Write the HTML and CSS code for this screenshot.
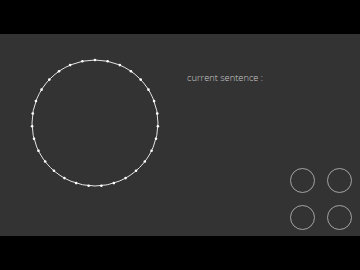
FILE: index.html
```html
<!DOCTYPE html>
<html lang="en">

<head>
  <meta charset="UTF-8">
  <meta name="viewport" content="width=device-width, initial-scale=1.0">
  <title>Sentence wheel</title>
  <link rel="stylesheet" href="styles.css">
</head>

<body>
  <div class="top-bar"></div>

  <div class="stage">
    <!-- letter wheel -->
    <svg class="wheel" width="140" height="140" viewBox="0 0 140 140">
      <circle class="ring" cx="70" cy="70" r="63"></circle>
      <g class="dots">
        <circle cx="70" cy="7" r="1.3"></circle>
        <circle cx="82.68" cy="8.29" r="1.3"></circle>
        <circle cx="94.85" cy="12.10" r="1.3"></circle>
        <circle cx="105.99" cy="18.29" r="1.3"></circle>
        <circle cx="115.66" cy="26.59" r="1.3"></circle>
        <circle cx="123.46" cy="36.67" r="1.3"></circle>
        <circle cx="129.08" cy="48.12" r="1.3"></circle>
        <circle cx="132.28" cy="60.46" r="1.3"></circle>
        <circle cx="132.92" cy="73.19" r="1.3"></circle>
        <circle cx="130.99" cy="85.79" r="1.3"></circle>
        <circle cx="126.56" cy="97.75" r="1.3"></circle>
        <circle cx="119.82" cy="108.56" r="1.3"></circle>
        <circle cx="111.04" cy="117.80" r="1.3"></circle>
        <circle cx="100.57" cy="125.08" r="1.3"></circle>
        <circle cx="88.86" cy="130.11" r="1.3"></circle>
        <circle cx="76.37" cy="132.68" r="1.3"></circle>
        <circle cx="63.63" cy="132.68" r="1.3"></circle>
        <circle cx="51.14" cy="130.11" r="1.3"></circle>
        <circle cx="39.43" cy="125.08" r="1.3"></circle>
        <circle cx="28.96" cy="117.80" r="1.3"></circle>
        <circle cx="20.18" cy="108.56" r="1.3"></circle>
        <circle cx="13.44" cy="97.75" r="1.3"></circle>
        <circle cx="9.01" cy="85.79" r="1.3"></circle>
        <circle cx="7.08" cy="73.19" r="1.3"></circle>
        <circle cx="7.72" cy="60.46" r="1.3"></circle>
        <circle cx="10.92" cy="48.12" r="1.3"></circle>
        <circle cx="16.54" cy="36.67" r="1.3"></circle>
        <circle cx="24.34" cy="26.59" r="1.3"></circle>
        <circle cx="34.01" cy="18.29" r="1.3"></circle>
        <circle cx="45.15" cy="12.10" r="1.3"></circle>
        <circle cx="57.32" cy="8.29" r="1.3"></circle>
      </g>
    </svg>

    <p class="sentence">current sentence :</p>

    <!-- control pad -->
    <div class="pad">
      <div class="pad-button"></div>
      <div class="pad-button"></div>
      <div class="pad-button"></div>
      <div class="pad-button"></div>
    </div>
  </div>

  <div class="bottom-bar"></div>
</body>

</html>
```

FILE: styles.css
```css
* {
  margin: 0;
  padding: 0;
  box-sizing: border-box;
}

body {
  background: #000;
  font-family: 'Open Sans', 'Liberation Sans', sans-serif;
  height: 270px;
  overflow: hidden;
}

.top-bar,
.bottom-bar {
  height: 34px;
  background: #000;
}

.stage {
  height: 202px;
  background: #333333;
  display: flex;
  align-items: flex-start;
}

/* letter wheel */
.wheel {
  display: block;
  flex-shrink: 0;
  margin: 19px 0 0 25px;
}

.ring {
  fill: none;
  stroke: #e6e6e6;
  stroke-width: 1;
}

.dots circle {
  fill: #ffffff;
}

.sentence {
  margin: 37px 0 0 22px;
  font-size: 9.3px;
  font-weight: 300;
  line-height: 13px;
  color: #cacaca;
  white-space: nowrap;
}

/* control pad */
.pad {
  margin: 0 8px 6px auto;
  align-self: flex-end;
  display: grid;
  grid-template-columns: 25px 25px;
  gap: 12px;
}

.pad-button {
  width: 25px;
  height: 25px;
  border: 1px solid #a3a3a3;
  border-radius: 50%;
}
```
